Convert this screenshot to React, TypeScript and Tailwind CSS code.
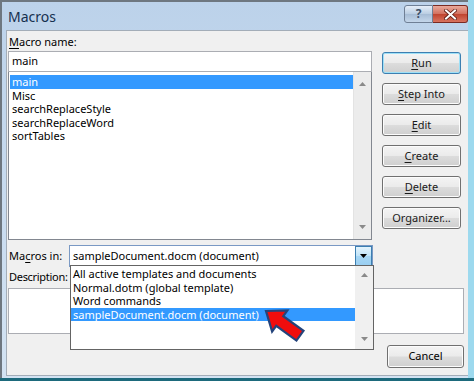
import React from 'react';

const font = "font-['Noto_Sans','DejaVu_Sans',sans-serif]";

function Key({ text, k }: { text: string; k: number }) {
  return (
    <>
      {text.slice(0, k)}
      <span className="underline underline-offset-2">{text[k]}</span>
      {text.slice(k + 1)}
    </>
  );
}

function Btn({ children, primary }: { children: React.ReactNode; primary?: boolean }) {
  return (
    <div
      className={`h-[22px] w-[79px] flex items-center justify-center rounded-[3px] border text-[11px] text-[#1a1a1a] bg-[linear-gradient(#f4f4f4_0%,#ebebeb_48%,#dcdcdc_52%,#cfcfcf_100%)] ${
        primary ? 'border-[#3c7fb1] shadow-[inset_0_0_0_1px_#9ee0f7]' : 'border-[#707070] shadow-[inset_0_0_0_1px_#fcfcfc]'
      }`}
    >
      {children}
    </div>
  );
}

function ScrollArrow({ up }: { up?: boolean }) {
  return (
    <svg width="7" height="4" viewBox="0 0 7 4">
      <path d={up ? 'M0 4 L3.5 0 L7 4 Z' : 'M0 0 L3.5 4 L7 0 Z'} fill="#8a8a8a" />
    </svg>
  );
}

export default function App() {
  return (
    <div className={`w-[474px] h-[381px] flex flex-col overflow-hidden bg-[#9dd9ee] ${font}`}>
      <div className="flex flex-1 min-h-0">
        {/* window */}
        <div className="w-[468px] flex flex-col border-l-2 border-t-2 border-[#6e7780] bg-[linear-gradient(#bcd2ea,#d3e3f3)]">
          {/* title bar */}
          <div className="h-[28px] flex items-start shrink-0">
            <div className="pl-[6px] pt-[4px] text-[14px] text-[#16304f]">Macros</div>
            <div className="ml-auto flex mt-[3px]">
              <div className="w-[29px] h-[18px] rounded-l-[3px] border border-[#6f7f95] bg-[linear-gradient(#e6eef8,#b9cde2_50%,#a7bdd6_52%,#c4d6ea)] flex items-center justify-center text-[12px] font-bold text-[#3d4f66]">
                ?
              </div>
              <div className="w-[35px] h-[18px] rounded-r-[3px] border border-[#7a2a22] border-l-0 bg-[linear-gradient(#e9a99c,#d2705e_50%,#c0442f_52%,#d8735f)] flex items-center justify-center">
                <svg width="13" height="11" viewBox="0 0 13 11">
                  <path d="M2 1.5 L11 9.5 M11 1.5 L2 9.5" stroke="#5a1a12" strokeWidth="3.6" strokeLinecap="square" />
                  <path d="M2 1.5 L11 9.5 M11 1.5 L2 9.5" stroke="#ffffff" strokeWidth="2" strokeLinecap="square" />
                </svg>
              </div>
            </div>
          </div>

          <div className="flex flex-1 min-h-0 pl-[4px] pb-[2px]">
            {/* client area */}
            <div className="relative flex-1 bg-[#f0f0f0] border border-[#a3adb8] border-r-0 text-[11px] text-black pl-[1px]">
              <div className="pt-[3px] pl-[1px] h-[20px] leading-[16px]">
                <Key text="Macro name:" k={0} />
              </div>

              <div className="flex">
                <div className="w-[364px] flex flex-col">
                  <div className="h-[21px] border border-[#abadb3] bg-white pl-[3px] leading-[18px]">main</div>
                  <div className="h-[168px] border border-t-0 border-[#828790] bg-white flex">
                    <div className="flex-1 pt-[3px] pl-[1px] leading-[13.5px]">
                      <div className="bg-[#3399ff] text-white h-[13.5px] pl-[2px]">main</div>
                      <div className="pl-[2px]">Misc</div>
                      <div className="pl-[2px]">searchReplaceStyle</div>
                      <div className="pl-[2px]">searchReplaceWord</div>
                      <div className="pl-[2px]">sortTables</div>
                    </div>
                    <div className="w-[18px] bg-[#ececec] border-l border-[#e3e3e3] flex flex-col items-center justify-between py-[10px]">
                      <ScrollArrow up />
                      <ScrollArrow />
                    </div>
                  </div>
                </div>

                <div className="ml-[10px] pt-[1px] flex flex-col gap-[9px]">
                  <Btn primary><Key text="Run" k={0} /></Btn>
                  <Btn><Key text="Step Into" k={0} /></Btn>
                  <Btn><Key text="Edit" k={0} /></Btn>
                  <Btn><Key text="Create" k={0} /></Btn>
                  <Btn><Key text="Delete" k={0} /></Btn>
                  <Btn>Organizer...</Btn>
                </div>
              </div>

              {/* macros in */}
              <div className="flex items-center mt-[5px]">
                <div className="w-[61px] pl-[1px]">
                  <Key text="Macros in:" k={2} />
                </div>
                <div className="w-[304px] h-[22px] border border-[#7a99c4] bg-white flex items-center">
                  <div className="flex-1 pl-[3px]">sampleDocument.docm (document)</div>
                  <div className="w-[17px] h-[20px] border border-[#3c7fb1] bg-[linear-gradient(#e4f4fd,#bfe3f8_50%,#a6d6f4_52%,#9acff2)] flex items-center justify-center">
                    <svg width="7" height="4" viewBox="0 0 7 4">
                      <path d="M0 0 L3.5 4 L7 0 Z" fill="#000" />
                    </svg>
                  </div>
                </div>
              </div>

              <div className="mt-[2px] pl-[1px] h-[16px] leading-[16px] tracking-[-0.3px]">Description:</div>
              <div className="mt-[3px] w-[456px] h-[46px] border border-[#abadb3] bg-white" />

              <div className="mt-[11px] flex justify-end pr-[4px]">
                <div className="h-[23px] w-[77px] flex items-center justify-center rounded-[3px] border border-[#707070] shadow-[inset_0_0_0_1px_#fcfcfc] text-[11px] bg-[linear-gradient(#f4f4f4_0%,#ebebeb_48%,#dcdcdc_52%,#cfcfcf_100%)]">
                  Cancel
                </div>
              </div>

              {/* open drop-down list */}
              <div className="absolute left-[63px] top-[234px] w-[304px] h-[85px] border border-[#646464] bg-white flex">
                <div className="flex-1 pt-[1px] leading-[13.5px]">
                  <div className="pl-[2px]">All active templates and documents</div>
                  <div className="pl-[2px]">Normal.dotm (global template)</div>
                  <div className="pl-[2px]">Word commands</div>
                  <div className="pl-[2px] bg-[#3399ff] text-white">sampleDocument.docm (document)</div>
                </div>
                <div className="w-[18px] bg-[#f0f0f0] flex flex-col items-center justify-between pt-[7px] pb-[8px]">
                  <ScrollArrow up />
                  <ScrollArrow />
                </div>
              </div>

              {/* red pointer arrow */}
              <svg className="absolute left-[254px] top-[271px]" width="56" height="46" viewBox="0 0 56 46">
                <g transform="translate(5 9) rotate(36)">
                  <path
                    d="M0 0 L17 -13 L17 -6 L42 -6 L42 6 L17 6 L17 13 Z"
                    fill="#f00d0d"
                    stroke="#24447c"
                    strokeWidth="2.2"
                    strokeLinejoin="miter"
                  />
                </g>
              </svg>
            </div>
          </div>
        </div>
      </div>
      <div className="h-[3px] bg-[#1d6a7c]" />
    </div>
  );
}
